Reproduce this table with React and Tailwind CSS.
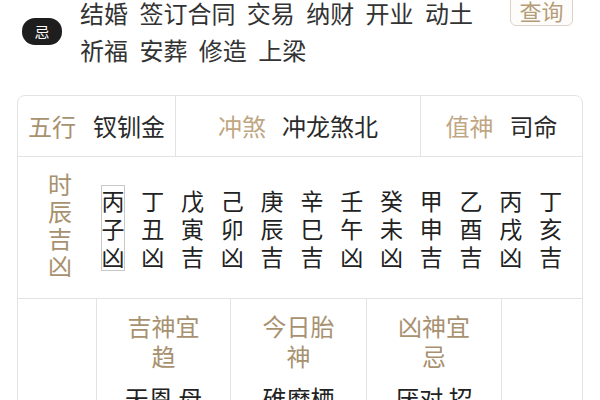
import React from "react";

const gz = [
  ["丙", "子", "凶"],
  ["丁", "丑", "凶"],
  ["戊", "寅", "吉"],
  ["己", "卯", "凶"],
  ["庚", "辰", "吉"],
  ["辛", "巳", "吉"],
  ["壬", "午", "凶"],
  ["癸", "未", "凶"],
  ["甲", "申", "吉"],
  ["乙", "酉", "吉"],
  ["丙", "戌", "凶"],
  ["丁", "亥", "吉"],
];

export default function App() {
  return (
    <div
      className="w-[600px] h-[400px] overflow-hidden bg-white text-[#2d2d2d]"
      style={{ fontFamily: '"Noto Sans CJK SC", "Noto Sans", sans-serif' }}
    >
      {/* header */}
      <div className="flex items-start pl-[22px] pr-[27px]">
        <div className="flex items-center mt-[-6px] h-[74px]">
          <div className="w-[40px] h-[27px] rounded-[13px] bg-[#1e1e1e] text-white text-[15px] flex items-center justify-center leading-none">
            忌
          </div>
        </div>
        <div className="ml-[18px] flex-1 mt-[-6px] text-[24px] leading-[37px] text-[#333] [word-spacing:6px] whitespace-nowrap">
          <div>结婚 签订合同 交易 纳财 开业 动土</div>
          <div>祈福 安葬 修造 上梁</div>
        </div>
        <div className="mt-[-12px] w-[63px] h-[38px] border border-[#d9d3ca] rounded-[6px] flex items-end justify-center pb-[4px] text-[22px] leading-none text-[#b59c78] bg-[#fdfcfa]">
          查询
        </div>
      </div>

      {/* table */}
      <div className="mx-[17px] mt-[27px] border border-[#e3e3e3] rounded-[8px] w-[566px]">
        {/* row 1 */}
        <div className="flex h-[61px] border-b border-[#e3e3e3] text-[24px]">
          <div className="w-[158px] border-r border-[#e3e3e3] flex items-center justify-center gap-[17px]">
            <span className="text-[#a8916f]">五行</span>
            <span className="text-[#2a2a2a]">钗钏金</span>
          </div>
          <div className="w-[245px] border-r border-[#e3e3e3] flex items-center justify-center gap-[16px]">
            <span className="text-[#c0a683]">冲煞</span>
            <span className="text-[#2a2a2a]">冲龙煞北</span>
          </div>
          <div className="flex-1 flex items-center justify-center gap-[16px]">
            <span className="text-[#c0a683]">值神</span>
            <span className="text-[#2a2a2a]">司命</span>
          </div>
        </div>

        {/* row 2 */}
        <div className="flex items-start h-[142px] border-b border-[#e3e3e3]">
          <div className="w-[75px] pl-[30px] pt-[13px] text-[24px] leading-[27px] text-[#a8916f] flex flex-col">
            <span>时</span>
            <span>辰</span>
            <span>吉</span>
            <span>凶</span>
          </div>
          <div className="flex items-start pt-[28px]">
            {gz.map((c, i) => (
              <div key={i} className="w-[39.8px] flex justify-center items-start">
                <div
                  className={
                    "flex flex-col items-center text-[23px] leading-[28px] text-[#222] w-[24px] " +
                    (i === 0 ? "border border-[#c8c8c8]" : "border border-transparent")
                  }
                >
                  <span>{c[0]}</span>
                  <span>{c[1]}</span>
                  <span>{c[2]}</span>
                </div>
              </div>
            ))}
          </div>
        </div>

        {/* row 3 */}
        <div className="flex h-[120px]">
          <div className="w-[79px] border-r border-[#e3e3e3]"></div>
          <div className="w-[134px] border-r border-[#e3e3e3] px-[20px] pt-[12px] text-center">
            <div className="text-[24px] leading-[30px] text-[#a8916f]">吉神宜趋</div>
            <div className="mt-[12px] text-[24px] leading-[30px] text-[#222]">天恩 母仓 不将</div>
          </div>
          <div className="w-[136px] border-r border-[#e3e3e3] px-[20px] pt-[12px] text-center">
            <div className="text-[24px] leading-[30px] text-[#a8916f]">今日胎神</div>
            <div className="mt-[12px] text-[24px] leading-[30px] text-[#222]">碓磨栖外东南</div>
          </div>
          <div className="w-[135px] border-r border-[#e3e3e3] px-[20px] pt-[12px] text-center">
            <div className="text-[24px] leading-[30px] text-[#a8916f]">凶神宜忌</div>
            <div className="mt-[12px] text-[24px] leading-[30px] text-[#222]">厌对 招摇 五离</div>
          </div>
          <div className="flex-1"></div>
        </div>
      </div>
    </div>
  );
}
